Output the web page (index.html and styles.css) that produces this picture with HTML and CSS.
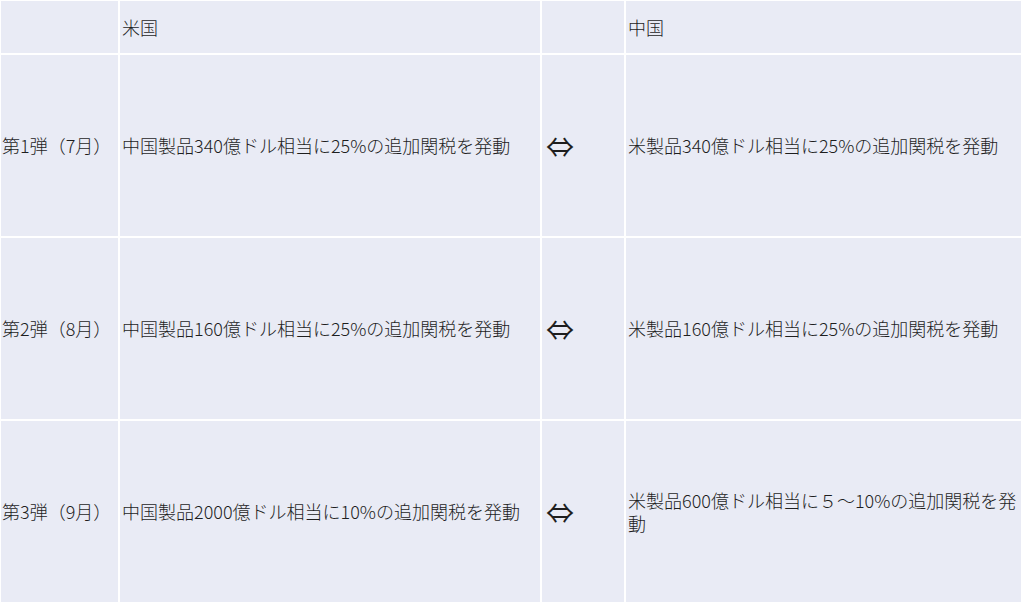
FILE: index.html
```html
<!DOCTYPE html>
<html lang="ja">
<head>
<meta charset="utf-8">
<link rel="stylesheet" href="styles.css">
</head>
<body>
<table class="tariff">
  <colgroup>
    <col class="c-stage">
    <col class="c-us">
    <col class="c-arrow">
    <col class="c-cn">
  </colgroup>
  <tr class="head">
    <td></td>
    <td>米国</td>
    <td></td>
    <td>中国</td>
  </tr>
  <tr class="row">
    <td>第1弾（7月）</td>
    <td>中国製品340億ドル相当に25%の追加関税を発動</td>
    <td class="arrow">⇔</td>
    <td>米製品340億ドル相当に25%の追加関税を発動</td>
  </tr>
  <tr class="row">
    <td>第2弾（8月）</td>
    <td>中国製品160億ドル相当に25%の追加関税を発動</td>
    <td class="arrow">⇔</td>
    <td>米製品160億ドル相当に25%の追加関税を発動</td>
  </tr>
  <tr class="row">
    <td>第3弾（9月）</td>
    <td>中国製品2000億ドル相当に10%の追加関税を発動</td>
    <td class="arrow">⇔</td>
    <td>米製品600億ドル相当に５～10%の追加関税を発動</td>
  </tr>
</table>
</body>
</html>
```
FILE: styles.css
```css
html, body {
  margin: 0;
  padding: 0;
  background: #ffffff;
}
body {
  padding: 1px 0 0 1px;
  font-family: "Noto Sans CJK JP", "Noto Sans", sans-serif;
  color: #1e1e1e;
}
.tariff {
  border-collapse: collapse;
  table-layout: fixed;
  width: 1021px;
}
.c-stage { width: 118px; }
.c-us { width: 422px; }
.c-arrow { width: 84px; }
.c-cn { width: 397px; }
.tariff td {
  background: #e9ebf5;
  border: 2px solid #ffffff;
  padding: 0 2px;
  font-size: 18px;
  font-weight: 300;
  line-height: 23px;
  vertical-align: middle;
}
.head td { height: 52px; }
.row td { height: 181px; }
.tariff tr:first-child td { border-top: 0; }
.tariff td:first-child { border-left: 0; padding-left: 1px; }
.tariff td.arrow {
  font-size: 28px;
  font-weight: 400;
  line-height: 28px;
  padding-left: 4px;
}
```
